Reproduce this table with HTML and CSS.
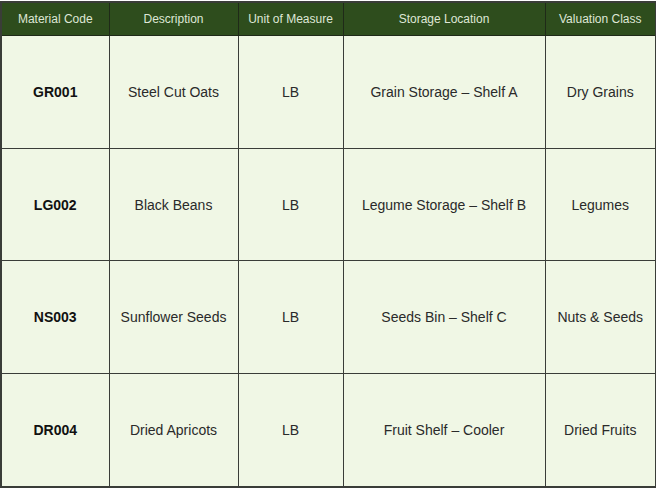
FILE: index.html
```html
<!DOCTYPE html>
<html>
<head>
<meta charset="utf-8">
<link rel="stylesheet" href="styles.css">
</head>
<body>
<table class="materials">
  <colgroup>
    <col class="c1"><col class="c2"><col class="c3"><col class="c4"><col class="c5">
  </colgroup>
  <thead>
    <tr>
      <th>Material Code</th>
      <th>Description</th>
      <th>Unit of Measure</th>
      <th>Storage Location</th>
      <th>Valuation Class</th>
    </tr>
  </thead>
  <tbody>
    <tr>
      <td class="code">GR001</td>
      <td>Steel Cut Oats</td>
      <td>LB</td>
      <td>Grain Storage – Shelf A</td>
      <td>Dry Grains</td>
    </tr>
    <tr>
      <td class="code">LG002</td>
      <td>Black Beans</td>
      <td>LB</td>
      <td>Legume Storage – Shelf B</td>
      <td>Legumes</td>
    </tr>
    <tr>
      <td class="code">NS003</td>
      <td>Sunflower Seeds</td>
      <td>LB</td>
      <td>Seeds Bin – Shelf C</td>
      <td>Nuts &amp; Seeds</td>
    </tr>
    <tr>
      <td class="code">DR004</td>
      <td>Dried Apricots</td>
      <td>LB</td>
      <td>Fruit Shelf – Cooler</td>
      <td>Dried Fruits</td>
    </tr>
  </tbody>
</table>
</body>
</html>
```
FILE: styles.css
```css
html, body {
  margin: 0;
  padding: 0;
  background: #ffffff;
}
body {
  padding: 1px 0 0 0;
  font-family: "Liberation Sans", Arial, sans-serif;
}
.materials {
  border-collapse: collapse;
  table-layout: fixed;
  width: 655px;
  background: #f0f7e5;
  border: 2px solid #3a3d38;
}
.c1 { width: 108px; }
.c2 { width: 129px; }
.c3 { width: 105px; }
.c4 { width: 202px; }
.c5 { width: 111px; }
.materials th {
  background: #2e4d1d;
  color: #dfe7d6;
  font-weight: normal;
  font-size: 12px;
  height: 32px;
  padding: 0;
  text-align: center;
  border: 1.5px solid #1f2a18;
}
.materials td {
  height: 111.7px;
  padding: 0;
  text-align: center;
  vertical-align: middle;
  font-size: 14px;
  color: #2a2a2a;
  border: 1.5px solid #3a3d38;
}
.materials td.code {
  font-weight: bold;
  color: #111;
}
```
